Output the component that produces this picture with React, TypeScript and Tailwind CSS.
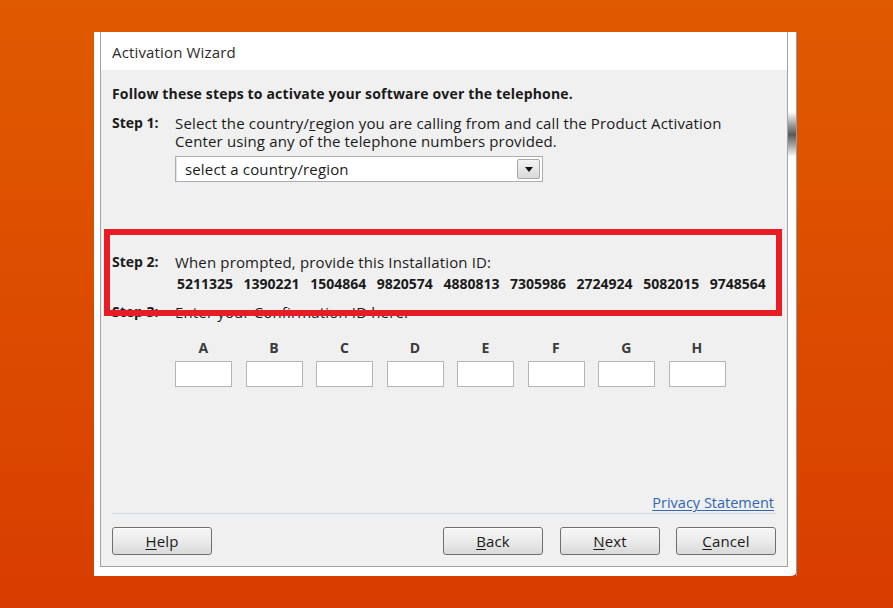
import React from 'react';

const ids = ['5211325', '1390221', '1504864', '9820574', '4880813', '7305986', '2724924', '5082015', '9748564'];
const letters = ['A', 'B', 'C', 'D', 'E', 'F', 'G', 'H'];

function WinButton({ mnemonic, rest, className = '' }: { mnemonic: string; rest: string; className?: string }) {
  return (
    <button
      className={`h-[28px] w-[100px] rounded-[3px] border border-[#707070] bg-linear-to-b from-[#f6f6f6] via-[#ebebeb] to-[#d9d9d9] text-[15px] leading-none text-[#1a1a1a] shadow-[inset_0_1px_0_0_#ffffff] ${className}`}
    >
      <span className="underline underline-offset-2">{mnemonic}</span>
      {rest}
    </button>
  );
}

export default function App() {
  return (
    <div
      className="w-[893px] h-[608px] overflow-hidden bg-linear-to-b from-[#e05a00] to-[#d83d00] pt-[32px] pl-[94px]"
      style={{ fontFamily: '"Open Sans", "Noto Sans", sans-serif' }}
    >
      {/* window frame */}
      <div className="flex h-[544px] w-[703px] items-start rounded-br-[6px] bg-white">
        <div className="w-[6px]" />

        {/* client area */}
        <div className="flex h-[535px] w-[688px] flex-col border-x border-b border-[#a3a3a3]">
          {/* header */}
          <div className="h-[38px] bg-white pl-[11px] pt-[11px] text-[15px] leading-[18px] tracking-[0.15px] text-[#2b2b2b]">
            Activation Wizard
          </div>

          {/* body */}
          <div className="relative flex flex-1 flex-col bg-[#f0f0f0] px-[11px] text-[15px] leading-[18px] tracking-[0.15px] text-[#1a1a1a]">
            <div className="mt-[15px] text-[14px] font-bold tracking-[0.17px]">
              Follow these steps to activate your software over the telephone.
            </div>

            {/* step 1 */}
            <div className="mt-[11px] flex">
              <div className="w-[63px] shrink-0 text-[14px] font-bold tracking-normal">Step 1:</div>
              <div>
                <div>
                  Select the country/<span className="underline underline-offset-1">r</span>egion you are calling from and call the Product Activation
                </div>
                <div>Center using any of the telephone numbers provided.</div>
                <div className="mt-[6px] flex h-[26px] w-[368px] items-center border border-[#abadb3] bg-white pl-[9px] pr-[2px] shadow-[inset_1px_0_0_0_#dbe6f4]">
                  <span className="flex-1">select a country/region</span>
                  <div className="flex h-[20px] w-[23px] items-center justify-center rounded-[2px] border border-[#a6a6a6] bg-linear-to-b from-[#f4f4f4] to-[#dadada]">
                    <svg width="8" height="5" viewBox="0 0 8 5">
                      <path d="M0 0h8L4 5z" fill="#111" />
                    </svg>
                  </div>
                </div>
              </div>
            </div>

            {/* step 2 */}
            <div className="mt-[71px] flex">
              <div className="w-[63px] shrink-0 text-[14px] font-bold tracking-normal">Step 2:</div>
              <div>
                <div>When prompted, provide this Installation ID:</div>
                <div className="mt-[4px] flex text-[14px] font-bold tracking-normal">
                  {ids.map((id) => (
                    <span key={id} className="w-[66.6px] shrink-0 pl-[2px]">
                      {id}
                    </span>
                  ))}
                </div>
              </div>
            </div>

            {/* step 3 */}
            <div className="mt-[10px] flex">
              <div className="w-[63px] shrink-0 text-[14px] font-bold tracking-normal">Step 3:</div>
              <div>Enter your Confirmation ID here:</div>
            </div>

            {/* confirmation boxes */}
            <div className="ml-[63px] mt-[18px] flex gap-[13.5px]">
              {letters.map((l) => (
                <div key={l} className="flex w-[57px] flex-col items-center">
                  <div className="text-[14px] font-bold text-[#3a3a3a]">{l}</div>
                  <div className="mt-[4px] h-[26px] w-[57px] border border-[#b5b5b5] bg-white" />
                </div>
              ))}
            </div>

            <div className="flex-1" />

            <div className="flex justify-end pr-[2px]">
              <span className="text-[14.5px] tracking-normal text-[#2f67b4] underline underline-offset-2">Privacy Statement</span>
            </div>
            <div className="mt-[1px] h-px bg-[#d3dbe2]" />

            {/* buttons */}
            <div className="mb-[11px] mt-[13px] flex">
              <WinButton mnemonic="H" rest="elp" />
              <div className="flex-1" />
              <WinButton mnemonic="B" rest="ack" />
              <WinButton mnemonic="N" rest="ext" className="ml-[17px]" />
              <WinButton mnemonic="C" rest="ancel" className="ml-[16px]" />
            </div>

            {/* highlight rectangle */}
            <div className="pointer-events-none absolute left-[3px] top-[159px] h-[87px] w-[678px] border-[6px] border-[#e81c24]" />
          </div>
        </div>

        {/* right frame strip with scroll thumb */}
        <div className="flex h-[544px] w-[8px] flex-col">
          <div className="mt-[80px] h-[45px] w-full bg-linear-to-b from-white via-[#5a5a5a] to-white" />
        </div>
        <div className="h-[544px] w-px bg-[#9a9a9a]" />
      </div>
    </div>
  );
}
